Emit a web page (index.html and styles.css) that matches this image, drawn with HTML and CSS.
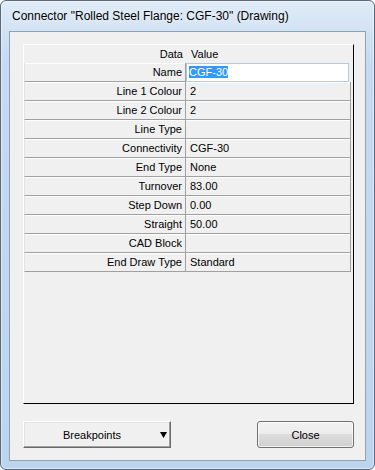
FILE: index.html
```html
<!DOCTYPE html>
<html lang="en">

<head>
    <meta charset="UTF-8">
    <meta name="viewport" content="width=device-width, initial-scale=1.0">
    <title>Connector</title>

    <link rel="stylesheet" href="styles.css">
</head>

<body>

    <div class="window">
        <div class="titlebar">Connector "Rolled Steel Flange: CGF-30" (Drawing)</div>

        <div class="client">
            <div class="grid-panel">
                <div class="grid-head">
                    <span class="head-data">Data</span>
                    <span class="head-value">Value</span>
                </div>

                <div class="grid">
                    <div class="label">Name</div>
                    <div class="value edit"><span class="sel">CGF-30</span></div>

                    <div class="label">Line 1 Colour</div>
                    <div class="value">2</div>

                    <div class="label">Line 2 Colour</div>
                    <div class="value">2</div>

                    <div class="label">Line Type</div>
                    <div class="value"></div>

                    <div class="label">Connectivity</div>
                    <div class="value">CGF-30</div>

                    <div class="label">End Type</div>
                    <div class="value">None</div>

                    <div class="label">Turnover</div>
                    <div class="value">83.00</div>

                    <div class="label">Step Down</div>
                    <div class="value">0.00</div>

                    <div class="label">Straight</div>
                    <div class="value">50.00</div>

                    <div class="label">CAD Block</div>
                    <div class="value"></div>

                    <div class="label">End Draw Type</div>
                    <div class="value">Standard</div>
                </div>
            </div>

            <div class="buttons">
                <button type="button" class="btn-menu">
                    <span class="btn-text">Breakpoints</span>
                    <svg class="arrow" width="7" height="6" viewBox="0 0 7 6">
                        <path d="M0 0H7L3.5 6Z" fill="#000" />
                    </svg>
                </button>
                <button type="button" class="btn-close">Close</button>
            </div>
        </div>
    </div>

</body>

</html>
```

FILE: styles.css
```css
body {
    margin: 0;
    background: #ffffff;
    font-family: "Liberation Sans", Arial, sans-serif;
    font-size: 11px;
    color: #000;
}

.window {
    box-sizing: border-box;
    width: 375px;
    height: 470px;
    padding: 0 8px 8px 8px;
    border: 1px solid #5b6877;
    border-radius: 6px;
    background: linear-gradient(#dfebf7, #c6dbf1 60px, #bcd4ee);
    box-shadow: inset 0 0 0 1px rgba(255, 255, 255, 0.45);
}

.titlebar {
    height: 30px;
    display: flex;
    align-items: center;
    padding-left: 3px;
    font-family: "Liberation Sans", Arial, sans-serif;
    font-size: 12px;
    color: #000;
    text-shadow: 0 0 6px rgba(255, 255, 255, 0.9);
}

.client {
    box-sizing: border-box;
    height: 430px;
    border: 1px solid #8da1b8;
    background: #f0f0f0;
    padding: 12px 11px 0 13px;
}

.grid-panel {
    box-sizing: border-box;
    height: 360px;
    border-top: 1px solid #fff;
    border-left: 1px solid #fff;
    border-right: 1px solid #000;
    border-bottom: 1px solid #000;
}

.grid-head {
    display: grid;
    grid-template-columns: 162px 165px;
    height: 18px;
    line-height: 18px;
}

.head-data {
    text-align: right;
    padding-right: 3px;
}

.head-value {
    padding-left: 5px;
}

.grid {
    display: grid;
    grid-template-columns: 162px 165px;
    grid-auto-rows: 19px;
}

.label,
.value {
    box-sizing: border-box;
    line-height: 18px;
    border-bottom: 1px solid #a0a0a0;
    border-right: 1px solid #a0a0a0;
    box-shadow: inset 0 1px 0 #fff;
    white-space: nowrap;
}

.label {
    text-align: right;
    padding-right: 3px;
    border-left: 1px solid #e3e3e3;
}

.value {
    padding-left: 4px;
}

.value.edit {
    background: #fff;
    border: 1px solid #aecbe8;
    margin-right: 2px;
    padding-left: 2px;
    line-height: 17px;
    box-shadow: none;
}

.sel {
    background: #3399ff;
    color: #fff;
}

.buttons {
    display: flex;
    justify-content: space-between;
    margin-top: 17px;
}

button {
    font-family: "Liberation Sans", Arial, sans-serif;
    font-size: 11px;
    color: #000;
    height: 27px;
    margin: 0;
    padding: 0;
    cursor: pointer;
}

.btn-menu {
    display: flex;
    align-items: center;
    width: 148px;
    background: #f0f0f0;
    border-top: 1px solid #fff;
    border-left: 1px solid #fff;
    border-right: 1px solid #696969;
    border-bottom: 1px solid #696969;
    box-shadow: inset -1px -1px 0 #a0a0a0, inset 1px 1px 0 #e3e3e3;
}

.btn-text {
    flex: 1;
    text-align: center;
}

.arrow {
    margin-right: 3px;
}

.btn-close {
    width: 97px;
    border: 1px solid #707070;
    border-radius: 3px;
    background: linear-gradient(#f2f2f2 0%, #ebebeb 50%, #dddddd 50%, #cfcfcf 100%);
    box-shadow: inset 0 0 0 1px rgba(255, 255, 255, 0.7);
}
```
